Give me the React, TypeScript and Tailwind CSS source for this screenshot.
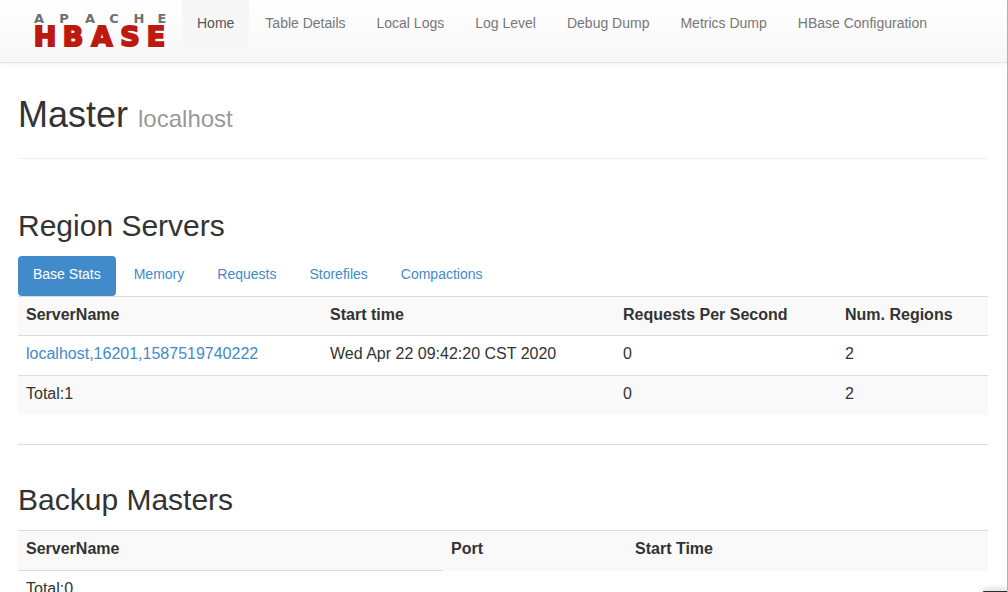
import React from 'react';

const navLinks = [
  'Home',
  'Table Details',
  'Local Logs',
  'Log Level',
  'Debug Dump',
  'Metrics Dump',
  'HBase Configuration'
];

const tabs = ['Base Stats', 'Memory', 'Requests', 'Storefiles', 'Compactions'];

const servers = [
  {
    name: 'localhost,16201,1587519740222',
    start: 'Wed Apr 22 09:42:20 CST 2020',
    requests: 0,
    regions: 2
  }
];

const Logo = () => (
  <svg
    width="136"
    height="44"
    viewBox="0 0 136 44"
    role="img"
    aria-label="Apache HBase"
    className="font-['DejaVu_Sans'] font-bold"
    textAnchor="middle"
  >
    <text x="7 32 58 82 107 130" y="11" fontSize="13" fill="#6f6f6f">
      APACHE
    </text>
    <text
      x="13 41 70 98 124"
      y="34"
      fontSize="27"
      fill="#bb1a10"
      stroke="#bb1a10"
      strokeWidth="2"
    >
      HBASE
    </text>
  </svg>
);

const Navbar = () => (
  <header className="h-[63px] border-b border-[#e3e3e3] bg-linear-to-b from-white to-[#f7f7f7] shadow-[0_1px_6px_rgba(0,0,0,0.06)]">
    <nav className="flex items-start pl-8">
      <a href="#" className="mr-3.5 pt-3 shrink-0">
        <Logo />
      </a>
      <ul className="flex gap-px text-sm leading-5">
        {navLinks.map((link, i) => (
          <li key={link}>
            <a
              href="#"
              className={
                i === 0
                  ? 'block px-[15px] pt-[13px] pb-4 bg-[#f7f7f7] text-[#555]'
                  : 'block px-[15px] pt-[13px] pb-4 text-[#777]'
              }
            >
              {link}
            </a>
          </li>
        ))}
      </ul>
    </nav>
  </header>
);

export default function App() {
  return (
    <div className="relative h-screen overflow-hidden border-r border-[#b0b0b0] bg-white font-['Liberation_Sans',sans-serif] text-base leading-[23px] text-[#333]">
      <Navbar />

      <main className="pl-[18px] pr-[19px]">
        <div className="mt-7 pb-5 border-b border-[#eee]">
          <h1 className="text-4xl leading-[47px]">
            Master <small className="text-2xl leading-none text-[#999]">localhost</small>
          </h1>
        </div>

        {/* Region Servers */}
        <section className="pt-[50px]">
          <h2 className="text-[30px] leading-[33px]">Region Servers</h2>
          <div className="flex gap-[3px] mt-3.5 text-sm leading-5">
            {tabs.map((tab, i) => (
              <a
                key={tab}
                href="#"
                className={
                  i === 0
                    ? 'px-[15px] pt-2 pb-3 rounded bg-[#428bca] text-white'
                    : 'px-[15px] pt-2 pb-3 text-[#428bca]'
                }
              >
                {tab}
              </a>
            ))}
          </div>
          <table className="w-full table-fixed text-left">
            <colgroup>
              <col className="w-[304px]" />
              <col className="w-[293px]" />
              <col className="w-[222px]" />
              <col />
            </colgroup>
            <tbody>
              <tr className="border-t border-[#ddd] bg-[#f9f9f9]">
                <th className="px-2 pt-1.5 pb-[9px]">ServerName</th>
                <th className="px-2 pt-1.5 pb-[9px]">Start time</th>
                <th className="px-2 pt-1.5 pb-[9px]">Requests Per Second</th>
                <th className="px-2 pt-1.5 pb-[9px]">Num. Regions</th>
              </tr>
              {servers.map((s) => (
                <tr key={s.name} className="border-t border-[#ddd]">
                  <td className="px-2 pt-1.5 pb-2.5">
                    <a href="#" className="text-[#428bca]">
                      {s.name}
                    </a>
                  </td>
                  <td className="px-2 pt-1.5 pb-2.5">{s.start}</td>
                  <td className="px-2 pt-1.5 pb-2.5">{s.requests}</td>
                  <td className="px-2 pt-1.5 pb-2.5">{s.regions}</td>
                </tr>
              ))}
              <tr className="border-t border-[#ddd] bg-[#f9f9f9]">
                <td className="px-2 pt-1.5 pb-2.5">Total:{servers.length}</td>
                <td />
                <td className="px-2 pt-1.5 pb-2.5">0</td>
                <td className="px-2 pt-1.5 pb-2.5">2</td>
              </tr>
            </tbody>
          </table>
        </section>

        {/* Backup Masters */}
        <section className="mt-[29px] pt-[38px] border-t border-[#ddd]">
          <h2 className="text-[30px] leading-[33px]">Backup Masters</h2>
          <table className="mt-3.5 w-full table-fixed text-left">
            <colgroup>
              <col className="w-[425px]" />
              <col className="w-[184px]" />
              <col />
            </colgroup>
            <tbody>
              <tr className="border-t border-[#ddd] bg-[#f9f9f9]">
                <th className="px-2 pt-1.5 pb-2.5">ServerName</th>
                <th className="px-2 pt-1.5 pb-2.5">Port</th>
                <th className="px-2 pt-1.5 pb-2.5">Start Time</th>
              </tr>
              <tr>
                <td className="px-2 pt-1.5 pb-2.5 border-t border-[#ddd]">Total:0</td>
              </tr>
            </tbody>
          </table>
        </section>
      </main>

      {/* edge of the floating panel in the corner */}
      <div className="absolute right-0 bottom-0 h-px w-6 rounded-tl bg-[#2b2b33] shadow-[0_0_6px_1px_rgba(0,0,0,0.3)]" />
    </div>
  );
}
